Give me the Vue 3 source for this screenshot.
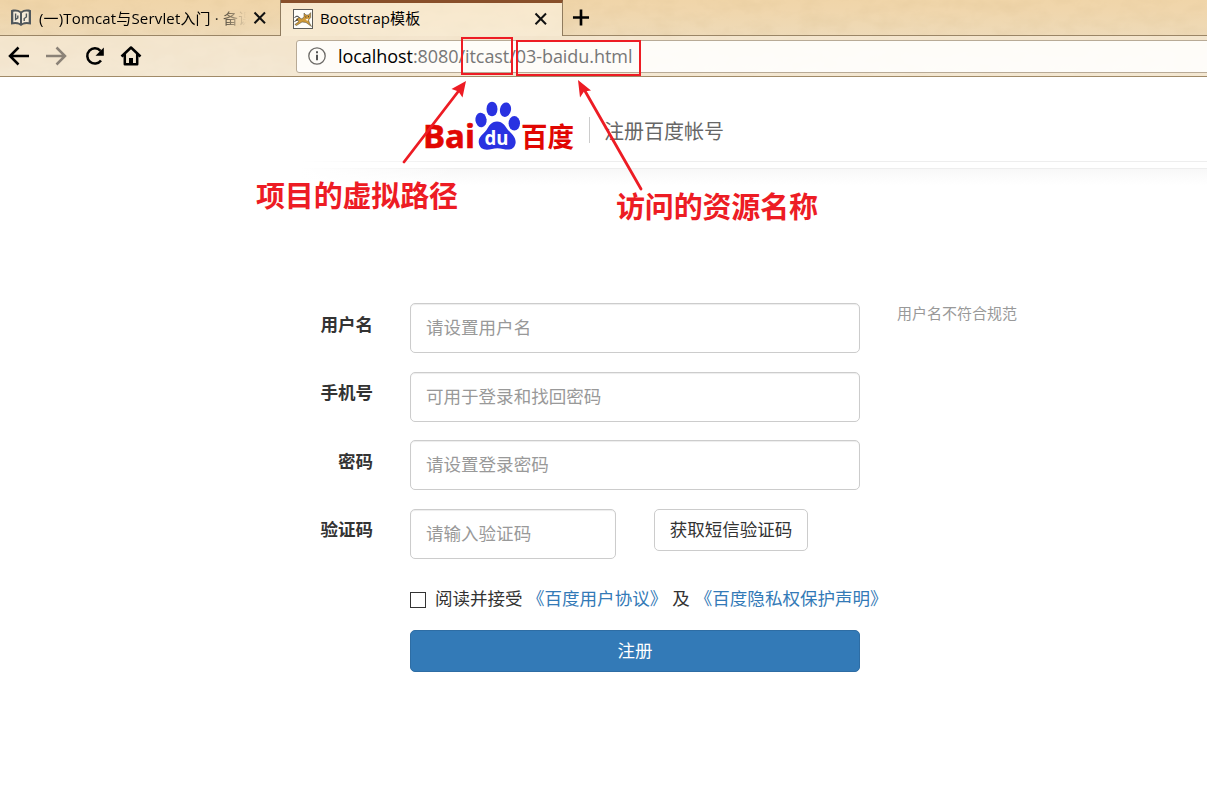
<script setup>
const rows = [
  { label: '用户名', hint: '请设置用户名', note: '用户名不符合规范' },
  { label: '手机号', hint: '可用于登录和找回密码' },
  { label: '密码', hint: '请设置登录密码' },
  { label: '验证码', hint: '请输入验证码', action: '获取短信验证码' },
]
</script>

<template>
  <div class="window">
    <header class="chrome">
      <svg class="paper" width="1207" height="77" aria-hidden="true">
        <filter id="grain" x="0" y="0" width="100%" height="100%">
          <feTurbulence type="fractalNoise" baseFrequency="0.04 0.07" numOctaves="5" seed="8" />
          <feColorMatrix values="0 0 0 0 0.62  0 0 0 0 0.45  0 0 0 0 0.22  0.3 0 0 0 -0.12" />
        </filter>
        <rect width="1207" height="77" filter="url(#grain)" />
      </svg>
      <div class="tabs">
        <div class="tab">
          <svg class="favicon" width="22" height="20" viewBox="0 0 22 20">
            <path d="M1 2.2 L3 1.6 Q8 .8 11 3.4 Q14 .8 19 1.6 L21 2.2 V16.6 Q14 15 11 18 Q8 15 1 16.6Z" fill="#50575b" />
            <path d="M3.3 3.7 Q7.5 3 10 5 V15.3 Q7.5 13.7 3.3 14.2Z M18.7 3.7 Q14.5 3 12 5 V15.3 Q14.5 13.7 18.7 14.2Z" fill="#f4ead8" />
            <path d="M5.6 5.5V11.5L7.8 10V7.5M16.4 5.5V9L14.2 10.5V13" fill="none" stroke="#50575b" stroke-width="1.4" />
          </svg>
          <span class="title faded"><span class="t1">(一)Tomcat与Servlet入门 · 备课</span></span>
          <svg class="close" width="14" height="14" viewBox="0 0 14 14"><path d="M1.5 1.5 12 12.2M12 1.5 1.5 12.2" /></svg>
        </div>
        <div class="tab active">
          <svg class="favicon" width="20" height="20" viewBox="0 0 20 20">
            <rect x=".5" y=".5" width="19" height="19" fill="#fffef9" stroke="#5c5c58" />
            <path d="M3 10.5 L6 8.5 9 10 11 7.5 V4 L13 6 H15.5 L17.7 3.6 V8.5 L15.5 11 16.5 14 18.5 17.5 13 13.5 9 13 3.5 16.5 1.8 15.5 6 12.5Z" fill="#cf9a38" stroke="#44423b" stroke-width=".5" />
            <path d="M1.5 8.5 L4 7 6.5 8.5M1.5 12.5 L5 10.5M12.3 8 h1M15 7.7 h1" stroke="#333" fill="none" />
            <path d="M12.5 10.5 15.5 9.5 14.5 12Z" fill="#fff" />
          </svg>
          <span class="title">Bootstrap模板</span>
          <svg class="close" width="14" height="14" viewBox="0 0 14 14"><path d="M1.5 1.5 12 12.2M12 1.5 1.5 12.2" /></svg>
        </div>
        <svg class="plus" width="18" height="18" viewBox="0 0 18 18"><path d="M9 .6V17.4M.5 9H17.5" /></svg>
        <div class="rest"></div>
      </div>
      <div class="toolbar">
        <svg class="nav" width="150" height="38" viewBox="0 0 150 38" fill="none" stroke="#000" stroke-width="2.5">
          <path d="M29 20H10.5M18.5 11.5 10 20 18.5 28.5" />
          <path d="M46 20H64.5M56.5 11.5 65 20 56.5 28.5" stroke="#8b8277" />
          <path d="M100.5 14.8A7.6 7.6 0 1 0 101 24.5" />
          <path d="M103.8 11.5v8.3H95.5Z" fill="#000" stroke="none" />
          <path d="M121.5 20.5 131 11.5 140.5 20.5M124.8 18V28.3H137.2V18" stroke-linejoin="round" />
          <path d="M129 28.5V22h4V28.5Z" fill="#000" stroke="none" />
        </svg>
        <div class="address">
          <svg width="18" height="18" viewBox="0 0 18 18">
            <circle cx="9" cy="9" r="8.2" fill="none" stroke="#6c6a67" stroke-width="1.3" />
            <path d="M9 7.7V13.3M9 4.2V6.2" stroke="#555" stroke-width="2" />
          </svg>
          <span class="url"><b>localhost</b>:8080/itcast/03-baidu.html</span>
        </div>
      </div>
    </header>

    <main>
      <div class="banner">
        <svg class="logo" width="152" height="52" viewBox="0 0 152 52">
          <g class="brand" fill="#e10602">
            <text x="-1" y="47" font-size="32" textLength="52" lengthAdjust="spacingAndGlyphs" stroke="#e10602" stroke-width=".6">Bai</text>
            <text x="97" y="45.5" font-size="27" textLength="53" lengthAdjust="spacingAndGlyphs">百度</text>
          </g>
          <g fill="#2932e1">
            <ellipse cx="57" cy="19" rx="5.6" ry="7.3" transform="rotate(-8 57 19)" />
            <ellipse cx="68" cy="8" rx="5.5" ry="7.3" />
            <ellipse cx="81.5" cy="8.7" rx="5.5" ry="7.3" transform="rotate(12 81.5 8.7)" />
            <ellipse cx="90.3" cy="22.3" rx="5.7" ry="7.3" />
            <path d="M73 20.5C79 20.5 81 25 84 29C88 33 92.5 37 91.5 42.5C90 49.5 84 49 79 48C75 47 71 47.2 68 48C61 49.7 56 48.5 54.8 42C54 36 59 33.5 62.5 29C65 25 67 20.5 73 20.5Z" />
          </g>
          <text class="du" x="60.5" y="44" font-size="20" fill="#fff" textLength="24" lengthAdjust="spacingAndGlyphs">du</text>
        </svg>
        <span class="divider"></span>
        <span class="heading">注册百度帐号</span>
      </div>
      <div class="shade"></div>

      <form @submit.prevent>
        <div v-for="row in rows" :key="row.label" class="row">
          <label>{{ row.label }}</label>
          <input type="text" :class="{ short: row.action }" :placeholder="row.hint" />
          <span v-if="row.note" class="note">{{ row.note }}</span>
          <button v-if="row.action" type="button" class="sms">{{ row.action }}</button>
        </div>
        <div class="agree">
          <span class="box"></span>
          <span class="accept">阅读并接受</span>
          <a>《百度用户协议》</a>
          <span class="and">及</span>
          <a>《百度隐私权保护声明》</a>
        </div>
        <button type="button" class="submit">注册</button>
      </form>
    </main>

    <svg class="marks" width="1207" height="240" viewBox="0 0 1207 240">
      <g fill="none" stroke="#ed1c24" stroke-width="2">
        <rect x="462" y="38" width="50" height="36" />
        <rect x="517" y="41" width="123" height="34" />
        <path d="M404 162 459 90.5M641 189 585 91" stroke-width="2.8" stroke-linecap="round" />
      </g>
      <path d="M466 81 462.5 97.5 458.5 91.5 451.5 89Z M578 80 591 90.5 584 91.5 580 97.5Z" fill="#ed1c24" />
      <g class="caption">
        <text x="256" y="207" textLength="202">项目的虚拟路径</text>
        <text x="616" y="218" textLength="202">访问的资源名称</text>
      </g>
    </svg>
  </div>
</template>

<style>
body { margin: 0; background: #fff; overflow: hidden; }
</style>

<style scoped>
* { box-sizing: border-box; }
.window { position: relative; width: 1207px; height: 803px; overflow: hidden; background: #fff; color: #333; font-family: "Open Sans", "Noto Sans CJK SC", sans-serif; }
.chrome { position: relative; height: 77px; background: linear-gradient(#f0d5a9 0, #f0d6ac 10px, #eedab8 36px, #eee0c7 77px); border-bottom: 1px solid #a08a68; }
.paper { position: absolute; inset: 0; }
.tabs, .toolbar { position: relative; display: flex; }
.tabs { height: 36px; }
.tab { display: flex; align-items: center; width: 281px; border-right: 1px solid #8f7b5e; border-bottom: 1px solid #9a8566; padding: 1px 13px 0 10px; }
.tab.active { width: 282px; border-top: 3px solid #884f2a; border-bottom: 0; background: rgba(252, 242, 224, .65); padding: 0 14px 0 12px; }
.active > * { position: relative; top: -1px; }
.title { flex: 1; margin-left: 7px; color: #000; font-size: 15px; line-height: 24px; white-space: nowrap; overflow: hidden; }
.faded { -webkit-mask-image: linear-gradient(90deg, #000 172px, transparent 207px); mask-image: linear-gradient(90deg, #000 172px, transparent 207px); }
.t1 { letter-spacing: .16px; }
.active .title { top: -2px; letter-spacing: .1px; }
.close { flex: none; }
.close path { stroke: #111; stroke-width: 2; fill: none; }
.plus { width: 36px; height: 36px; padding: 9px; border-bottom: 1px solid #9a8566; }
.plus path { stroke: #000; stroke-width: 2.8; }
.rest { flex: 1; border-bottom: 1px solid #9a8566; }
.toolbar { height: 40px; background: rgba(248, 238, 220, .58); }
.nav { flex: none; }
.address { display: flex; flex: none; align-items: center; width: 920px; height: 33px; margin: 4px 0 0 146px; padding: 0 0 1px 11px; border: 1px solid #b8aa96; border-radius: 3px; background: rgba(255, 255, 254, .88); }
.url { margin-left: 12px; color: #777; font-size: 18px; letter-spacing: -.06px; white-space: nowrap; }
.url b { color: #000; font-weight: 400; }
.banner { display: flex; height: 84px; padding: 24px 0 0 424px; }
.logo { flex: none; overflow: visible; }
.brand { font-family: "Open Sans", "Noto Sans CJK SC", sans-serif; font-weight: 700; }
.du { font-family: "Open Sans", sans-serif; font-weight: 700; }
.divider { width: 1px; height: 26px; margin: 16px 0 0 13px; background: #ccc; }
.heading { margin: 16px 0 0 14px; color: #666; font-size: 20px; line-height: 30px; }
.shade { height: 24px; margin-left: 300px; background: linear-gradient(90deg, #fff 0, transparent 160px), linear-gradient(#eee 0 1px, #fff 1px 7px, #eee 7px 8px, #f8f8f8 8px, #fff 24px); }
form { display: flex; flex-direction: column; padding: 118px 0 0 290px; font-size: 17.55px; }
.row { display: flex; height: 50px; margin-bottom: 18.67px; }
label { width: 83px; padding-top: 7.5px; margin-right: 37px; text-align: right; font-weight: 700; line-height: 26px; }
input { width: 450px; height: 50px; padding: 0 15px 2px; border: 1px solid #ccc; border-radius: 5px; background: #fff; box-shadow: inset 0 1px 1px rgba(0, 0, 0, .075); font: inherit; }
input.short { width: 206px; }
input::placeholder { color: #999; opacity: 1; }
.note { margin-left: 37px; color: #999; font-size: 15px; line-height: 20px; }
.sms { width: 154px; height: 42px; margin-left: 38px; padding: 0 0 2px; border: 1px solid #ccc; border-radius: 5px; background: #fff; color: #333; font: inherit; white-space: nowrap; }
.agree { display: flex; height: 26px; margin: 8px 0 0 120px; line-height: 24px; white-space: nowrap; }
.box { flex: none; width: 16px; height: 16px; margin: 6px 9px 0 0; border: 1px solid #333; background: #fff; }
.accept { width: 92px; }
.agree a { color: #337ab7; }
.agree .and { margin: 0 5px; }
.submit { width: 450px; height: 42px; margin: 18px 0 0 120px; padding: 0 0 2px; border: 1px solid #2e6da4; border-radius: 5px; background: #337ab7; color: #fff; font: inherit; }
.marks { position: absolute; left: 0; top: 0; pointer-events: none; }
.caption { fill: #ed1c24; font-family: "Noto Sans CJK SC", sans-serif; font-size: 29px; font-weight: 700; }
</style>
